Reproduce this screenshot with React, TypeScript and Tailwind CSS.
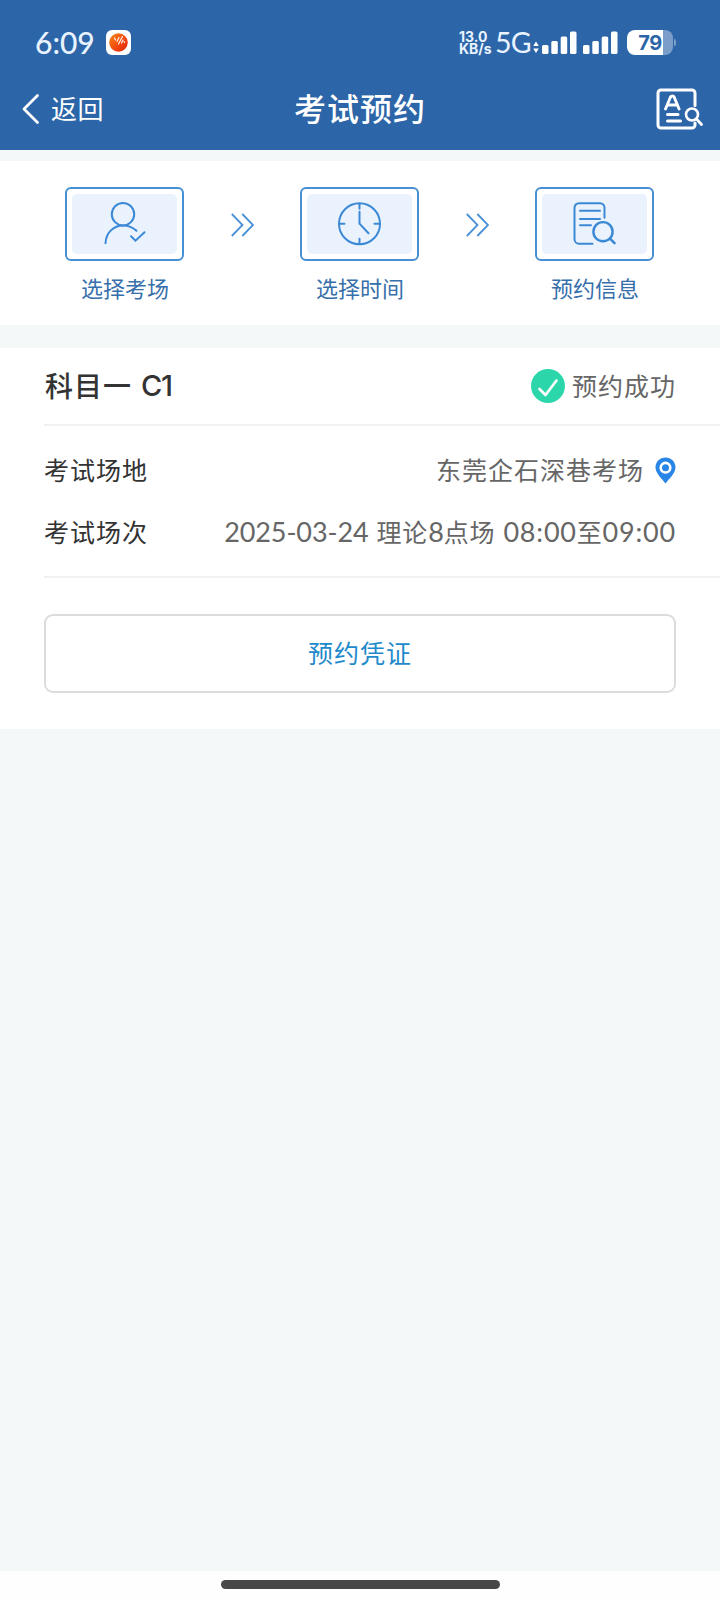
import type { ReactNode } from "react";

function StatusBar() {
  return (
    <div className="flex h-[74px] items-center pt-[11px] pl-[35px] pr-[44px]">
      <span className="w-[61px] pb-[2px] text-[30px] leading-[30px] font-medium text-[#e9f3ff]">6:09</span>
      <svg className="ml-[10px] h-[25px] w-[25px]" viewBox="0 0 25 25">
        <defs>
          <linearGradient id="ball" x1="0" y1="0" x2="1" y2="1">
            <stop offset="0" stopColor="#f98a17" />
            <stop offset="0.6" stopColor="#f2430f" />
            <stop offset="1" stopColor="#d92508" />
          </linearGradient>
        </defs>
        <rect width="25" height="25" rx="6" fill="#fff" />
        <circle cx="12.5" cy="12.5" r="9.3" fill="url(#ball)" />
        <path
          d="M8.5 8l1 2M11 11.5l2-4M12.5 14l4-7.5M15.5 13l1.5-3M18 11.5l0.5 1"
          stroke="#fff"
          strokeWidth="1.1"
          strokeLinecap="round"
          fill="none"
        />
      </svg>

      <div className="ml-auto flex items-center text-[#e9f3ff]">
        <div className="w-[36px] pt-px font-['Inter',sans-serif] text-[14px] leading-[12.5px] font-bold">
          <div>13.0</div>
          <div>KB/s</div>
        </div>
        <span className="w-[37px] pb-px text-[28.5px] leading-[28px] tracking-[-0.8px]">5G</span>
        <svg className="h-[25px] w-[86px]" viewBox="0 0 86 25" fill="#fff">
          <path d="M4 11.5l2.8 4.5H1.2zM4 23l2.8-4.5H1.2z" />
          <rect x="10" y="15" width="6.5" height="9" rx="1.5" />
          <rect x="19.3" y="11" width="6.5" height="13" rx="1.5" />
          <rect x="28.7" y="6.5" width="6.5" height="17.5" rx="1.5" />
          <rect x="38" y="1.5" width="6.5" height="22.5" rx="1.5" />
          <rect x="51" y="15" width="6.5" height="9" rx="1.5" />
          <rect x="60.3" y="11" width="6.5" height="13" rx="1.5" />
          <rect x="69.7" y="6.5" width="6.5" height="17.5" rx="1.5" />
          <rect x="79" y="1.5" width="6.5" height="22.5" rx="1.5" />
        </svg>
        <div className="ml-[9px] flex h-[25px] w-[46px] items-center justify-center rounded-[8px] bg-[linear-gradient(90deg,#fff_78%,#7b9dca_78%)]">
          <span className="pt-px font-['Inter',sans-serif] text-[20px] leading-[25px] font-bold tracking-[-0.5px] text-[#2c65a8]">79</span>
        </div>
        <div className="ml-px h-[7px] w-[2px] rounded-r bg-[#7b9dca]" />
      </div>
    </div>
  );
}

function NavBar() {
  return (
    <div className="grid h-[76px] grid-cols-[1fr_auto_1fr] items-center pb-[6px] pl-[22px] pr-[17px] text-white">
      <div className="flex items-center">
        <svg className="h-[32px] w-[18px]" viewBox="0 0 18 32" fill="none" stroke="#fff" strokeWidth="2.8" strokeLinecap="round" strokeLinejoin="round">
          <path d="M15.5 2.5L2 16l13.5 13.5" />
        </svg>
        <span className="ml-[11px] text-[26px] leading-[32px] tracking-[0.5px]">返回</span>
      </div>
      <h1 className="-ml-[5px] text-[32px] leading-[40px] font-medium tracking-[1px]">考试预约</h1>
      <svg className="h-[42px] w-[48px] justify-self-end" viewBox="0 0 48 42" fill="none" stroke="#fff" strokeLinecap="round" strokeLinejoin="round">
        <path d="M40 17.5V5a3 3 0 0 0-3-3h-31a3 3 0 0 0-3 3v32a3 3 0 0 0 3 3h31a3 3 0 0 0 3-3v-2" strokeWidth="3" />
        <path d="M10.5 21l5-12a2 2 0 0 1 3.6 0l5 12M13 17h9" strokeWidth="2.9" />
        <path d="M12.5 26.6h10.5M12.5 33h13" strokeWidth="3" />
        <circle cx="37" cy="26.5" r="6" strokeWidth="2.6" />
        <path d="M41.5 31l5 5.5" strokeWidth="2.8" />
      </svg>
    </div>
  );
}

function Step({ label, children }: { label: string; children: ReactNode }) {
  return (
    <div className="flex w-[119px] flex-col items-center">
      <div className="h-[74px] w-full rounded-[6px] border-2 border-[#468fd3] p-[5px]">
        <div className="flex h-full items-center justify-center rounded-[5px] bg-[#eaf2fe]">
          <svg className="h-[48px] w-[48px]" viewBox="0.5 0.3 48 48" fill="none" stroke="#3b89d5" strokeWidth="2" strokeLinecap="round">
            {children}
          </svg>
        </div>
      </div>
      <span className="mt-[12px] pl-px text-[22px] leading-[32px] whitespace-nowrap text-[#376fab]">{label}</span>
    </div>
  );
}

function Arrows() {
  return (
    <svg className="mt-[26px] h-[24px] w-[23px]" viewBox="0 0 23 24" fill="none" stroke="#4a91d6" strokeWidth="1.8">
      <path d="M0.8 1l10.7 11L0.8 23M11.3 1L22 12 11.3 23" />
    </svg>
  );
}

function Steps() {
  return (
    <section className="flex h-[164px] items-start justify-between bg-white pt-[26px] pl-[65px] pr-[66px]">
      <Step label="选择考场">
        <circle cx="22.5" cy="14.5" r="11.2" />
        <path d="M5 43.5C5.5 33 13 25.7 22.5 25.7c5.5 0 10 2 13.5 5.3" />
        <path d="M30.5 36.5l4.5 4.5 9-8.5" />
      </Step>
      <Arrows />
      <Step label="选择时间">
        <circle cx="24" cy="24" r="20.5" />
        <path d="M24 4v5M24 39v5M4 24h5M39 24h5" />
        <path d="M24 12v12l9 9.5" />
      </Step>
      <Arrows />
      <Step label="预约信息">
        <path d="M34 18V8a4.5 4.5 0 0 0-4.5-4.5H8.5A4.5 4.5 0 0 0 4 8v31.5A4.5 4.5 0 0 0 8.5 44h13.500" />
        <path d="M9.5 11h20M9.5 19.3h20M9.5 25.5h11" />
        <circle cx="32.5" cy="32" r="9.6" strokeWidth="2.4" />
        <path d="M39.5 39l4.5 4.5" strokeWidth="2.6" />
      </Step>
    </section>
  );
}

function Booking() {
  return (
    <section className="h-[381px] bg-white pl-[44px] text-[25px] leading-[36px] tracking-[1px] text-[#333]">
      <div className="flex h-[78px] items-center justify-between border-b-2 border-[#f2f2f2] pr-[44px]">
        <h2 className="flex gap-[9px] pl-px text-[28px] font-medium">
          科目一
          <span className="font-['Inter',sans-serif] text-[29px] tracking-[-1.2px]">C1</span>
        </h2>
        <div className="flex items-center text-[#666]">
          <svg className="mr-[7px] h-[34px] w-[34px]" viewBox="0 0 34 34" fill="none">
            <circle cx="17" cy="17" r="17" fill="#2bd7aa" />
            <path d="M8.5 20l6 6L25.5 11.5" stroke="#fff" strokeWidth="2.7" strokeLinecap="round" strokeLinejoin="round" />
          </svg>
          预约成功
        </div>
      </div>

      <div className="flex h-[152px] flex-col gap-[26px] border-b-2 border-[#f2f2f2] pt-[26px] pr-[44px]">
        <div className="flex items-center justify-between">
          <span>考试场地</span>
          <span className="flex items-center text-[#666]">
            东莞企石深巷考场
            <svg className="ml-[11px] h-[27px] w-[21px]" viewBox="0 0 21 27">
              <path d="M10.5 0.5C4.8 0.5 0.5 4.8 0.5 10.3c0 6 6.5 11.7 10 16.2 3.5-4.5 10-10.2 10-16.2 0-5.5-4.3-9.8-10-9.8z" fill="#2a86e6" />
              <circle cx="10.5" cy="10.7" r="4.8" fill="none" stroke="#fff" strokeWidth="2.6" />
            </svg>
          </span>
        </div>
        <div className="flex items-center justify-between">
          <span>考试场次</span>
          <span className="flex text-[#666]">
            <span className="text-[27px] tracking-[-0.1px]">2025-03-24</span>
            <span className="ml-[8px] tracking-[0.8px]">理论<span className="text-[27px] tracking-normal">8</span>点场</span>
            <span className="ml-[8px] text-[27px] tracking-[0.8px]">08:00</span>
            <span className="tracking-[0.8px]">至</span>
            <span className="text-[27px] tracking-[0.8px]">09:00</span>
          </span>
        </div>
      </div>

      <div className="pt-[36px] pr-[44px]">
        <button className="h-[79px] w-full rounded-[9px] border-2 border-[#dcdcdc] pb-[2px] tracking-[1px] text-[#1f8acb]">
          预约凭证
        </button>
      </div>
    </section>
  );
}

export default function App() {
  return (
    <div className="flex h-[1600px] w-[720px] flex-col overflow-hidden bg-[#f4f8f9] font-['Lato','Noto_Sans_CJK_SC',sans-serif]">
      <header className="h-[150px] bg-[#2c65a8]">
        <StatusBar />
        <NavBar />
      </header>
      <main className="flex flex-col gap-[23px] pt-[11px]">
        <Steps />
        <Booking />
      </main>
      <footer className="mt-auto flex h-[29px] justify-center bg-[#fefefe] pt-[9px]">
        <div className="h-[9px] w-[279px] rounded-full bg-[#484848]" />
      </footer>
    </div>
  );
}
